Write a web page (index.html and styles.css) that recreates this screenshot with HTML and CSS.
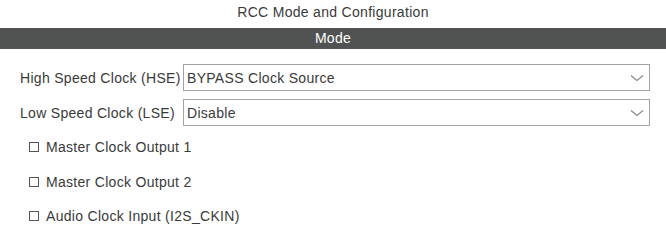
FILE: index.html
```html
<!DOCTYPE html>
<html lang="en">
<head>
    <meta charset="UTF-8">
    <title>RCC Mode and Configuration</title>
    <link rel="stylesheet" href="styles.css">
</head>
<body>
    <div class="title">RCC Mode and Configuration</div>
    <div class="section-bar">Mode</div>

    <div class="fields">
        <label class="field-label">High Speed Clock (HSE)</label>
        <div class="dropdown">
            <span>BYPASS Clock Source</span>
            <svg class="chevron" width="14" height="8" viewBox="0 0 14 8"><path d="M1 1.5 L7 6.5 L13 1.5" fill="none" stroke="#8a8a8a" stroke-width="1.2"/></svg>
        </div>

        <label class="field-label">Low Speed Clock (LSE)</label>
        <div class="dropdown">
            <span>Disable</span>
            <svg class="chevron" width="14" height="8" viewBox="0 0 14 8"><path d="M1 1.5 L7 6.5 L13 1.5" fill="none" stroke="#8a8a8a" stroke-width="1.2"/></svg>
        </div>
    </div>

    <div class="checks">
        <div class="check-row"><span class="box"></span>Master Clock Output 1</div>
        <div class="check-row"><span class="box"></span>Master Clock Output 2</div>
        <div class="check-row"><span class="box"></span>Audio Clock Input (I2S_CKIN)</div>
    </div>
</body>
</html>
```

FILE: styles.css
```css
body {
    font-family: "Liberation Sans", Arial, sans-serif;
    font-size: 14px;
    letter-spacing: 0.3px;
    color: #3a3a3a;
    margin: 0;
    background-color: #fff;
}

.title {
    height: 28px;
    line-height: 24px;
    text-align: center;
}

.section-bar {
    height: 21px;
    line-height: 21px;
    background-color: #515352;
    color: #fff;
    text-align: center;
}

.fields {
    display: grid;
    grid-template-columns: 158px 1fr;
    column-gap: 5px;
    row-gap: 8px;
    align-items: center;
    padding: 15px 16px 0 20px;
}

.field-label {
    white-space: nowrap;
}

.dropdown {
    height: 25px;
    border: 1px solid #a3a3a3;
    display: flex;
    align-items: center;
    justify-content: space-between;
    padding: 0 5px 0 3px;
}

.checks {
    padding: 4px 0 0 29px;
}

.check-row {
    height: 34.5px;
    display: flex;
    align-items: center;
}

.box {
    width: 8px;
    height: 8px;
    border: 1.5px solid #555;
    margin-right: 7px;
}
```
